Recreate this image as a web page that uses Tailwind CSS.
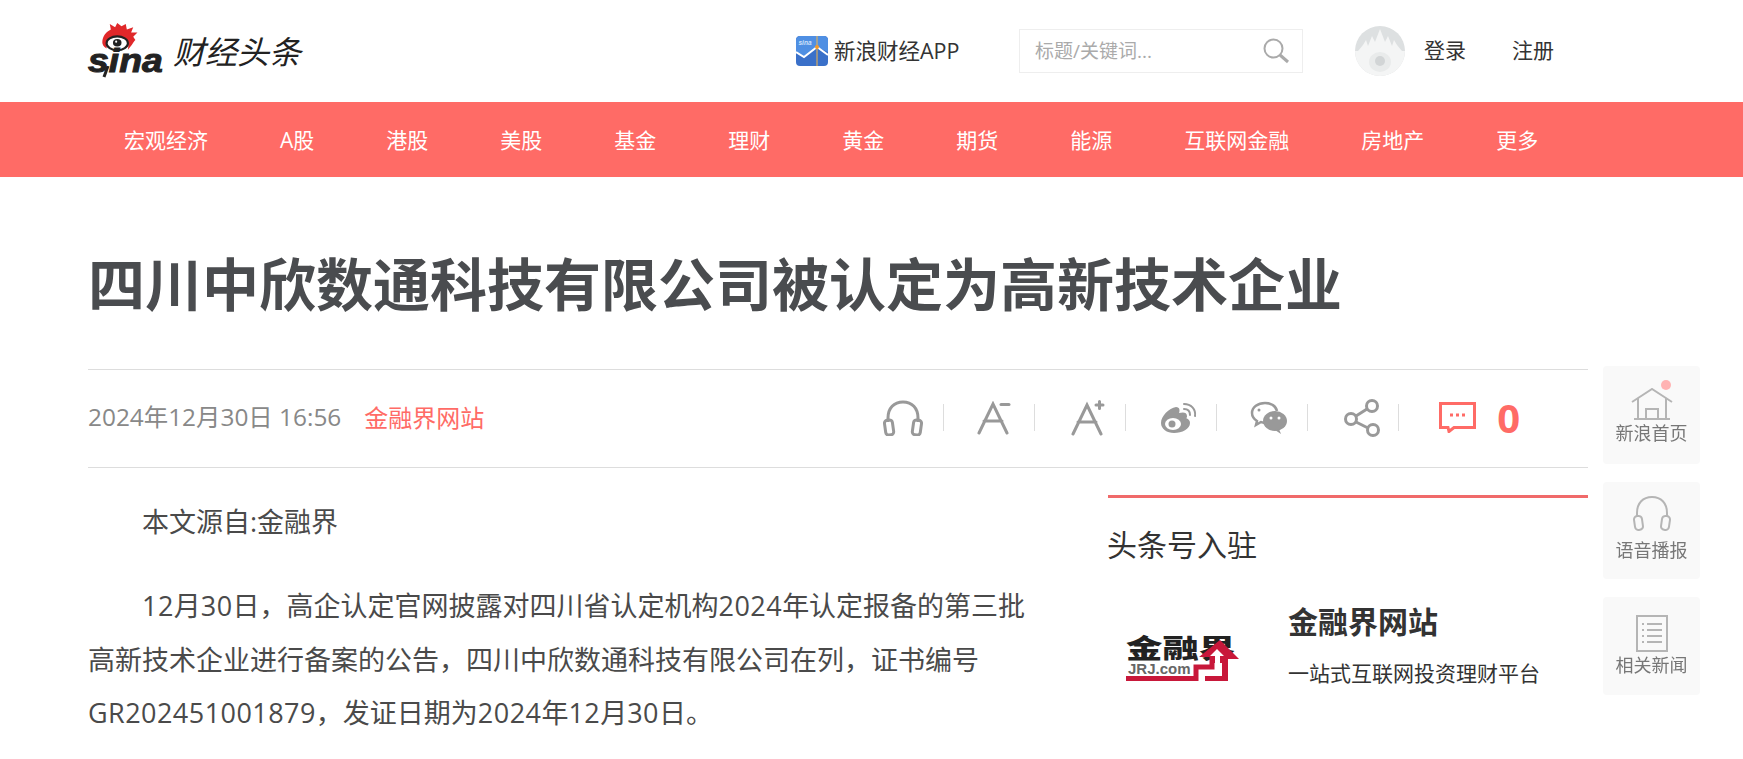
<!DOCTYPE html>
<html lang="zh-CN">
<head>
    <meta charset="UTF-8">
    <title>四川中欣数通科技有限公司被认定为高新技术企业</title>
    <script src="https://cdn.jsdelivr.net/npm/@tailwindcss/browser@4"></script>
</head>
<body class="bg-white h-[759px] overflow-hidden font-['Open_Sans','Noto_Sans_CJK_SC',sans-serif] text-[#333]">
    <!-- header -->
    <header class="h-[102px] pl-[88px] flex items-center">
        <div class="w-[709px] flex items-center">
            <div class="relative w-[76px] h-[56px] mt-[-2px]">
                <svg class="absolute left-[14px] top-[1px]" width="39" height="32" viewBox="0 0 36 30">
                    <path d="M0 18C0 12 4 8 8 6L7 1L12 4L14 0L18 3L22 1L23 6L29 4L27 9L33 9L29 13L31 16C29 18 28 21 24 25C26 17 21 13 14 13C8 13 4 16 4 24C1 22 0 20 0 18Z" fill="#e0282a"/>
                    <ellipse cx="14" cy="19" rx="10" ry="6.5" fill="#fff" stroke="#222" stroke-width="2"/>
                    <ellipse cx="14" cy="18.5" rx="4" ry="3.5" fill="#222"/>
                    <circle cx="13" cy="17.5" r="1" fill="#fff"/>
                </svg>
                <span class="absolute left-0 top-[18px] text-[34px] leading-[40px] font-bold italic text-[#222] [-webkit-text-stroke:1px_#222] font-['Liberation_Sans',sans-serif] scale-x-110 origin-left">sina</span>
                <svg class="absolute left-[14px] top-[44px]" width="8" height="12" viewBox="0 0 8 12">
                    <path d="M6 0L2 11" stroke="#222" stroke-width="3"/>
                </svg>
            </div>
            <span class="ml-[9px] text-[32px] leading-none italic text-[#222] mt-[2px]">财经头条</span>
        </div>
        <div class="flex items-center w-[222px]">
            <svg width="32" height="30" viewBox="0 0 32 30" class="mr-[6px] -ml-[1px]">
                <rect width="32" height="30" rx="4" fill="#3a70c9"/>
                <path d="M0 4C0 2 2 0 4 0H28C30 0 32 2 32 4V16L21 11L8 21L0 16Z" fill="#4f8fe3"/>
                <path d="M0 16L8 21L21 11L32 19" fill="none" stroke="#fff" stroke-width="2"/>
                <path d="M21 0V30" stroke="#f3b54a" stroke-width="1"/>
                <circle cx="21" cy="11" r="2" fill="#f39a2b"/>
                <text x="2.5" y="9" font-size="6.5" font-style="italic" font-weight="700" fill="#cfe2fa" font-family="Liberation Sans">sina</text>
            </svg>
            <span class="text-[21.5px] text-[#333] whitespace-nowrap">新浪财经APP</span>
        </div>
        <div class="w-[284px] h-[44px] border border-[#eee] flex items-center justify-between pl-[15px] pr-[12px]">
            <span class="text-[19px] text-[#aaa]">标题/关键词...</span>
            <svg width="28" height="28" viewBox="0 0 28 28" fill="none" stroke="#aaa">
                <circle cx="11.5" cy="11.5" r="9" stroke-width="2"/>
                <path d="M18 18L26 25" stroke-width="3"/>
            </svg>
        </div>
        <svg width="50" height="50" viewBox="0 0 50 50" class="ml-[52px]">
            <circle cx="25" cy="25" r="25" fill="#dde0e1"/>
            <path d="M3 25L8 19L11 14L13 20L17 10L20 16L25 3L30 16L33 10L37 20L39 14L42 19L47 25L50 25A25 25 0 0 1 0 25Z" fill="#f4f5f5"/>
            <ellipse cx="25" cy="36" rx="11" ry="10" fill="#e9ebeb"/>
            <circle cx="25" cy="35" r="5" fill="#d2d5d6"/>
        </svg>
        <a class="ml-[19px] text-[21px] text-[#333]">登录</a>
        <a class="ml-[46px] text-[21px] text-[#333]">注册</a>
    </header>

    <!-- nav -->
    <nav class="h-[75px] bg-[#ff6b66] pl-[88px] pt-[2px] flex items-center text-[21px] text-white">
        <a class="px-[36px]">宏观经济</a>
        <a class="px-[36px]">A股</a>
        <a class="px-[36px]">港股</a>
        <a class="px-[36px]">美股</a>
        <a class="px-[36px]">基金</a>
        <a class="px-[36px]">理财</a>
        <a class="px-[36px]">黄金</a>
        <a class="px-[36px]">期货</a>
        <a class="px-[36px]">能源</a>
        <a class="px-[36px]">互联网金融</a>
        <a class="px-[36px]">房地产</a>
        <a class="px-[36px]">更多</a>
    </nav>

    <main class="w-[1500px] ml-[88px]">
        <h1 class="h-[192px] flex items-center pt-[23px] text-[57px] font-bold text-[#4a4c4f] whitespace-nowrap">四川中欣数通科技有限公司被认定为高新技术企业</h1>

        <!-- meta row -->
        <div class="h-[99px] border-y border-[#ddd] flex items-center pb-[2px]">
            <span class="text-[24.4px] text-[#888]">2024年12月30日 16:56</span>
            <span class="ml-[23px] text-[24px] text-[#ff6b66]">金融界网站</span>
            <div class="ml-auto mr-[68px] flex items-center text-[#999]">
                <div class="w-[91px] h-[27px] border-r border-[#ddd] flex items-center justify-center pl-[10px]">
                    <svg width="40" height="36" viewBox="0 0 40 36" fill="none" stroke="#999" stroke-width="3" class="shrink-0">
                        <path d="M5 22V18C5 8 11 2 20 2S35 8 35 18V22"/>
                        <rect x="2" y="20" width="8" height="15" rx="3" transform="rotate(-8 6 27)"/>
                        <rect x="30" y="20" width="8" height="15" rx="3" transform="rotate(8 34 27)"/>
                    </svg>
                </div>
                <div class="w-[91px] h-[27px] border-r border-[#ddd] flex items-center justify-center pl-[9px]">
                    <svg width="34" height="34" viewBox="0 0 34 34" fill="none" stroke="#999" stroke-width="3" stroke-linecap="round" class="shrink-0">
                        <path d="M2 32L16 3L30 32M7 20H25"/>
                        <path d="M24 3.5H32"/>
                    </svg>
                </div>
                <div class="w-[91px] h-[27px] border-r border-[#ddd] flex items-center justify-center pl-[15px]">
                    <svg width="34" height="36" viewBox="0 0 34 36" fill="none" stroke="#999" stroke-width="3" stroke-linecap="round" class="shrink-0">
                        <path d="M2 34L16 5L30 34M7 22H25"/>
                        <path d="M25 5H32M28.5 1.5V8.5"/>
                    </svg>
                </div>
                <div class="w-[91px] h-[27px] border-r border-[#ddd] flex items-center justify-center pl-[14px]">
                    <svg width="38" height="32" viewBox="0 0 38 32" class="shrink-0">
                        <path d="M2 21C2 14 10 6 17 5C21 5 21 9 20 11C24 10 28 10 28 14C28 15 28 16 27 16C30 17 31 19 31 21C31 27 23 31 15 31C8 31 2 27 2 21Z" fill="#999"/>
                        <ellipse cx="14" cy="22" rx="8" ry="6" fill="#fff"/>
                        <circle cx="13" cy="22" r="3.5" fill="#999"/>
                        <path d="M25 7C29 7 31 9 31 13M25 2C32 2 37 7 36 14" fill="none" stroke="#999" stroke-width="2" stroke-linecap="round"/>
                    </svg>
                </div>
                <div class="w-[91px] h-[27px] border-r border-[#ddd] flex items-center justify-center pl-[14px]">
                    <svg width="38" height="34" viewBox="0 0 38 34" class="shrink-0">
                        <path d="M15 2C8 2 2 6 2 12C2 15 4 18 7 20L6 24L11 21C12 21 13 22 15 22" fill="#fff" stroke="#999" stroke-width="2.5"/>
                        <path d="M15 2C21 2 26 5 27 10" fill="none" stroke="#999" stroke-width="2.5"/>
                        <ellipse cx="25" cy="20" rx="12" ry="10" fill="#999"/>
                        <path d="M29 28L31 33L25 29Z" fill="#999"/>
                        <circle cx="21" cy="17" r="1.5" fill="#fff"/>
                        <circle cx="29" cy="17" r="1.5" fill="#fff"/>
                        <circle cx="9" cy="9" r="1.5" fill="#999"/>
                    </svg>
                </div>
                <div class="w-[91px] h-[27px] border-r border-[#ddd] flex items-center justify-center pl-[18px]">
                    <svg width="37" height="38" viewBox="0 0 37 38" fill="none" stroke="#999" stroke-width="3" class="shrink-0">
                        <circle cx="28" cy="7" r="5.5"/>
                        <circle cx="7" cy="20" r="5.5"/>
                        <circle cx="29" cy="31" r="5.5"/>
                        <path d="M12 17L23 10M12 23L24 29"/>
                    </svg>
                </div>
                <svg width="37" height="31" viewBox="0 0 37 31" class="ml-[40px]" fill="none" stroke="#ff6b66" stroke-width="3">
                    <path d="M1.5 1.5H35.5V25.5H15L10 29.5L9 25.5H1.5Z"/>
                    <path d="M11 13H14M17 13H20M23 13H26"/>
                </svg>
                <span class="ml-[21px] text-[40px] leading-none font-bold text-[#ff6b66]">0</span>
            </div>
        </div>

        <div class="flex">
            <article class="w-[950px] mt-[27px] text-[27px] leading-[53.4px] text-[#4a4a4a]">
                <p class="indent-[54px]">本文源自:金融界</p>
                <p class="indent-[54px] mt-[31px]"><span class="tracking-[0.45px]">12</span>月<span class="tracking-[0.45px]">30</span>日，高企认定官网披露对四川省认定机构<span class="tracking-[0.45px]">2024</span>年认定报备的第三批高新技术企业进行备案的公告，四川中欣数通科技有限公司在列，证书编号<span class="tracking-[0.45px]">GR202451001879</span>，发证日期为<span class="tracking-[0.45px]">2024</span>年<span class="tracking-[0.45px]">12</span>月<span class="tracking-[0.45px]">30</span>日。</p>
            </article>
            <aside class="ml-[70px] w-[480px] mt-[27px] border-t-[3px] border-[#f06a6a] h-fit">
                <h3 class="mt-[27px] -ml-[1px] text-[30px] leading-[40px] text-[#333]">头条号入驻</h3>
                <div class="mt-[37px] flex">
                    <div class="relative w-[114px] h-[46px] ml-[18px] mt-[33px]">
                        <span class="absolute left-0 top-0 text-[26px] leading-[26px] font-black text-[#222] whitespace-nowrap scale-x-140 origin-left">金融界</span>
                        <span class="absolute left-[2px] top-[27px] text-[15px] leading-[14px] font-bold text-[#666] font-['Liberation_Sans',sans-serif]">JRJ.com</span>
                        <svg class="absolute left-0 top-0" width="114" height="46" viewBox="0 0 114 46">
                            <path d="M0 43.5H70V32H86V22" fill="none" stroke="#c8183a" stroke-width="5"/>
                            <path d="M73 22L94 5L113 24H102V46H79V41H96V22Z" fill="#c8183a"/>
                            <path d="M88 22H96V28H88Z" fill="#c8183a"/>
                            <path d="M91 14L84 21H89V32H94V21H98Z" fill="#fff"/>
                        </svg>
                    </div>
                    <div class="ml-[48px]">
                        <div class="text-[30px] leading-[40px] font-bold text-[#333] whitespace-nowrap">金融界网站</div>
                        <div class="mt-[16px] text-[21px] leading-[30px] text-[#333] whitespace-nowrap">一站式互联网投资理财平台</div>
                    </div>
                </div>
            </aside>
        </div>
    </main>

    <!-- side tools -->
    <div class="fixed left-[1603px] top-[366px] w-[97px] flex flex-col gap-[18px] text-[18px] text-[#777]">
        <a class="h-[98px] bg-[#f9f9f9] rounded-[4px] flex flex-col items-center pt-[22px] relative">
            <span class="absolute right-[29px] top-[14px] w-[10px] h-[10px] rounded-full bg-[#ffb3b3]"></span>
            <svg width="42" height="32" viewBox="0 0 42 32" fill="none" stroke="#b5b5b5" stroke-width="2">
                <path d="M1 14L21 1L41 14M7 10V31M35 10V31M3 31H39M15 31V21H27V31"/>
            </svg>
            <span class="leading-[24px] mt-[1px]">新浪首页</span>
        </a>
        <a class="h-[97px] bg-[#f9f9f9] rounded-[4px] flex flex-col items-center pt-[13px]">
            <svg width="38" height="37" viewBox="0 0 38 37" fill="none" stroke="#b5b5b5" stroke-width="2">
                <path d="M4 22V18C4 8 10 2 19 2S34 8 34 18V22"/>
                <rect x="1.5" y="21" width="8" height="14" rx="3.5" transform="rotate(-8 5 28)"/>
                <rect x="28.5" y="21" width="8" height="14" rx="3.5" transform="rotate(8 33 28)"/>
            </svg>
            <span class="leading-[24px] mt-[6px]">语音播报</span>
        </a>
        <a class="h-[98px] bg-[#f9f9f9] rounded-[4px] flex flex-col items-center pt-[18px]">
            <svg width="32" height="37" viewBox="0 0 32 37" fill="none" stroke="#b5b5b5" stroke-width="2">
                <path d="M1 1H31V36H1Z"/>
                <path d="M11 9H26M11 15H26M11 21H26M11 27H26M6 9H8M6 15H8M6 21H8M6 27H8"/>
            </svg>
            <span class="leading-[24px] mt-[1px]">相关新闻</span>
        </a>
    </div>
</body>
</html>
